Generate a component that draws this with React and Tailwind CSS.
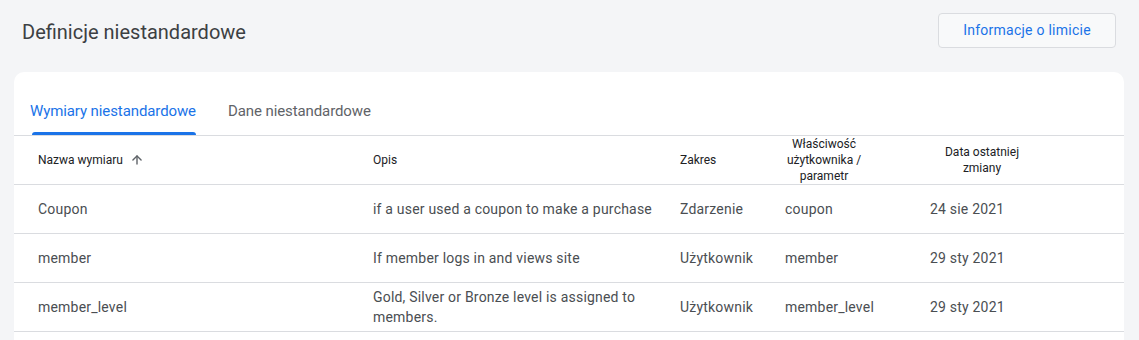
import { ArrowUp } from 'lucide-react';

const rows = [
    { name: 'Coupon', desc: 'if a user used a coupon to make a purchase', scope: 'Zdarzenie', param: 'coupon', date: '24 sie 2021' },
    { name: 'member', desc: 'If member logs in and views site', scope: 'Użytkownik', param: 'member', date: '29 sty 2021' },
    { name: 'member_level', desc: 'Gold, Silver or Bronze level is assigned to members.', scope: 'Użytkownik', param: 'member_level', date: '29 sty 2021' },
];

const App = () => {
    return (
        <div className="w-[1139px] h-[340px] overflow-hidden bg-[#f4f5f7] font-['Roboto',sans-serif]">
            <div className="flex items-start justify-between pl-[22px] pr-[23px] h-[72px]">
                <h1 className="mt-[18px] text-[20px] leading-[28px] text-[#3c4043]">Definicje niestandardowe</h1>
                <button className="mt-[13px] w-[178px] h-[35px] rounded border border-[#dadce0] bg-[#f8f9fa] text-[14px] tracking-[0.25px] text-[#1a73e8]">
                    Informacje o limicie
                </button>
            </div>

            <div className="mx-[14px] w-[1110px] bg-white rounded-t-[10px] pb-[40px]">
                {/* tabs */}
                <div className="flex pt-[15px] h-[64px] border-b border-[#dadce0]">
                    <div className="relative flex items-center pl-[16px] text-[15px] tracking-[-0.1px] text-[#1a73e8]">
                        Wymiary niestandardowe
                        <span className="absolute bottom-0 left-[18px] right-0 h-[3px] rounded-t-[3px] bg-[#1a73e8]" />
                    </div>
                    <div className="flex items-center pl-[32px] text-[15px] tracking-[-0.1px] text-[#5f6368]">
                        Dane niestandardowe
                    </div>
                </div>

                <table className="w-full table-fixed border-collapse">
                    <colgroup>
                        <col className="w-[343px]" />
                        <col className="w-[307px]" />
                        <col className="w-[105px]" />
                        <col className="w-[145px]" />
                        <col />
                    </colgroup>
                    <thead>
                        <tr className="h-[48px] border-b border-[#dadce0] text-[12px] text-[#202124] leading-[16px]">
                            <th className="pl-[24px] text-left font-normal">
                                <span className="inline-flex items-center gap-[7px]">
                                    Nazwa wymiaru
                                    <ArrowUp className="h-[14px] w-[14px] text-[#5f6368]" strokeWidth={2.4} />
                                </span>
                            </th>
                            <th className="pl-[16px] text-left font-normal">Opis</th>
                            <th className="pl-[16px] text-left font-normal">Zakres</th>
                            <th className="pl-[12px] text-left font-normal">
                                <div className="w-[86px] text-center">Właściwość użytkownika / parametr</div>
                            </th>
                            <th className="pl-[16px] text-left font-normal">
                                <div className="w-[104px] text-center">Data ostatniej zmiany</div>
                            </th>
                        </tr>
                    </thead>
                    <tbody>
                        {rows.map((r) => (
                            <tr key={r.name} className="h-[49px] border-b border-[#dadce0] text-[14px] tracking-[0.2px] text-[#4a4e52] leading-[20px]">
                                <td className="pl-[24px]">{r.name}</td>
                                <td className="pl-[16px]">{r.desc}</td>
                                <td className="pl-[16px]">{r.scope}</td>
                                <td className="pl-[16px]">{r.param}</td>
                                <td className="pl-[16px]">{r.date}</td>
                            </tr>
                        ))}
                    </tbody>
                </table>
            </div>
        </div>
    );
};

export default App;
